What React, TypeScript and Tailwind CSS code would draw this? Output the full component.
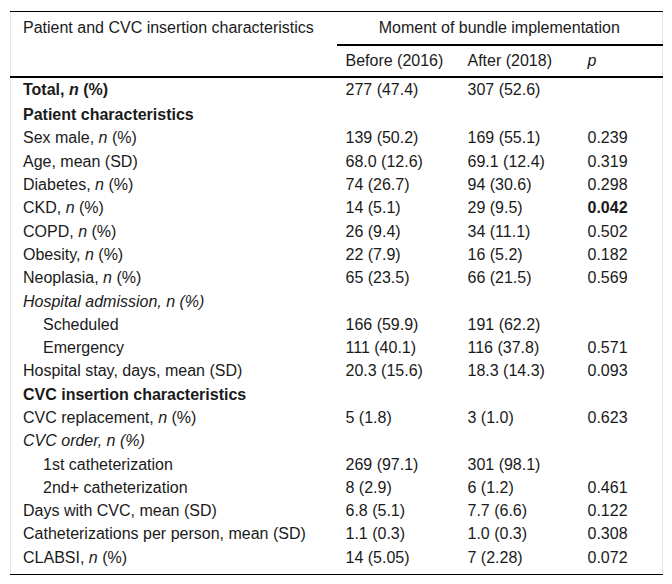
import React from 'react';

type Row = {
    label: React.ReactNode;
    before?: string;
    after?: string;
    p?: string;
    bold?: boolean;
    indent?: boolean;
    italic?: boolean;
    boldP?: boolean;
};

const N = () => <i>n</i>;

const ROWS: Row[] = [
    { label: <>Total, <N /> (%)</>, before: '277 (47.4)', after: '307 (52.6)', bold: true },
    { label: 'Patient characteristics', bold: true },
    { label: <>Sex male, <N /> (%)</>, before: '139 (50.2)', after: '169 (55.1)', p: '0.239' },
    { label: 'Age, mean (SD)', before: '68.0 (12.6)', after: '69.1 (12.4)', p: '0.319' },
    { label: <>Diabetes, <N /> (%)</>, before: '74 (26.7)', after: '94 (30.6)', p: '0.298' },
    { label: <>CKD, <N /> (%)</>, before: '14 (5.1)', after: '29 (9.5)', p: '0.042', boldP: true },
    { label: <>COPD, <N /> (%)</>, before: '26 (9.4)', after: '34 (11.1)', p: '0.502' },
    { label: <>Obesity, <N /> (%)</>, before: '22 (7.9)', after: '16 (5.2)', p: '0.182' },
    { label: <>Neoplasia, <N /> (%)</>, before: '65 (23.5)', after: '66 (21.5)', p: '0.569' },
    { label: 'Hospital admission, n (%)', italic: true },
    { label: 'Scheduled', before: '166 (59.9)', after: '191 (62.2)', indent: true },
    { label: 'Emergency', before: '111 (40.1)', after: '116 (37.8)', p: '0.571', indent: true },
    { label: 'Hospital stay, days, mean (SD)', before: '20.3 (15.6)', after: '18.3 (14.3)', p: '0.093' },
    { label: 'CVC insertion characteristics', bold: true },
    { label: <>CVC replacement, <N /> (%)</>, before: '5 (1.8)', after: '3 (1.0)', p: '0.623' },
    { label: 'CVC order, n (%)', italic: true },
    { label: '1st catheterization', before: '269 (97.1)', after: '301 (98.1)', indent: true },
    { label: '2nd+ catheterization', before: '8 (2.9)', after: '6 (1.2)', p: '0.461', indent: true },
    { label: 'Days with CVC, mean (SD)', before: '6.8 (5.1)', after: '7.7 (6.6)', p: '0.122' },
    { label: 'Catheterizations per person, mean (SD)', before: '1.1 (0.3)', after: '1.0 (0.3)', p: '0.308' },
    { label: <>CLABSI, <N /> (%)</>, before: '14 (5.05)', after: '7 (2.28)', p: '0.072' },
];

export default function App() {
    const last = ROWS.length - 1;
    return (
        <div className="bg-white pt-[11px] pl-[10px] h-[584px] font-['Liberation_Sans',Arial,sans-serif] text-[16px] text-[#1a1a1a]">
            <table className="w-[652px] border-collapse table-fixed border-x border-x-[#e6e6e6]">
                <colgroup>
                    <col className="w-[326px]" />
                    <col className="w-[122px]" />
                    <col className="w-[120px]" />
                    <col className="w-[84px]" />
                </colgroup>
                <thead>
                    <tr className="h-[33px] border-t border-t-black">
                        <th rowSpan={2} className="align-top pt-[7px] pl-[12px] text-left font-normal leading-[18px]">
                            Patient and CVC insertion characteristics
                        </th>
                        <th colSpan={3} className="text-center font-normal border-b-2 border-b-black leading-[18px]">
                            Moment of bundle implementation
                        </th>
                    </tr>
                    <tr className="h-[32px] border-b-2 border-b-black">
                        <th className="text-left font-normal pl-[9px] leading-[18px]">Before (2016)</th>
                        <th className="text-left font-normal pl-[9px] leading-[18px]">After (2018)</th>
                        <th className="text-left font-normal pl-[9px] leading-[18px] italic">p</th>
                    </tr>
                </thead>
                <tbody className="border-b border-b-black">
                    {ROWS.map((r, i) => {
                        const rowH = i === 0 ? 'h-[27px]' : i === last ? 'h-[28px]' : 'h-[23.3px]';
                        const cell = i === 0 ? 'align-top pt-[3px]' : i === last ? 'align-top pt-[3px]' : '';
                        return (
                            <tr key={i} className={rowH}>
                                <td
                                    className={`leading-[18px] ${cell} ${r.indent ? 'pl-[32px]' : 'pl-[12px]'} ${r.bold ? 'font-bold' : ''} ${r.italic ? 'italic' : ''}`}
                                >
                                    {r.label}
                                </td>
                                <td className={`pl-[9px] leading-[18px] ${cell}`}>{r.before}</td>
                                <td className={`pl-[9px] leading-[18px] ${cell}`}>{r.after}</td>
                                <td className={`pl-[9px] leading-[18px] ${cell} ${r.boldP ? 'font-bold' : ''}`}>{r.p}</td>
                            </tr>
                        );
                    })}
                </tbody>
            </table>
        </div>
    );
}
